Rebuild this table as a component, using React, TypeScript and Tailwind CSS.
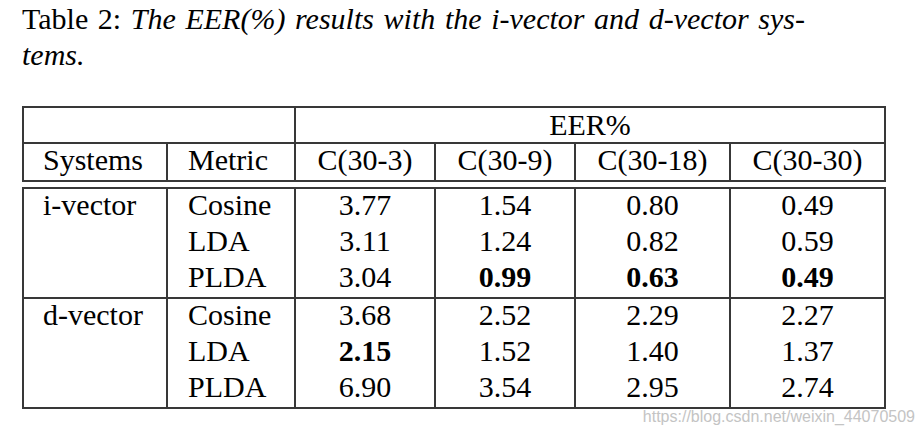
import React from 'react';

interface Row {
    metric: string;
    values: string[];
    bold: boolean[];
}

interface Group {
    system: string;
    rows: Row[];
}

const headers = ['C(30-3)', 'C(30-9)', 'C(30-18)', 'C(30-30)'];

const groups: Group[] = [
    {
        system: 'i-vector',
        rows: [
            { metric: 'Cosine', values: ['3.77', '1.54', '0.80', '0.49'], bold: [false, false, false, false] },
            { metric: 'LDA', values: ['3.11', '1.24', '0.82', '0.59'], bold: [false, false, false, false] },
            { metric: 'PLDA', values: ['3.04', '0.99', '0.63', '0.49'], bold: [false, true, true, true] },
        ],
    },
    {
        system: 'd-vector',
        rows: [
            { metric: 'Cosine', values: ['3.68', '2.52', '2.29', '2.27'], bold: [false, false, false, false] },
            { metric: 'LDA', values: ['2.15', '1.52', '1.40', '1.37'], bold: [true, false, false, false] },
            { metric: 'PLDA', values: ['6.90', '3.54', '2.95', '2.74'], bold: [false, false, false, false] },
        ],
    },
];

const gridCols = 'grid grid-cols-[142px_126px_138px_138px_153px_153px] gap-[2px] p-[2px] bg-[#383838] w-fit';

const App: React.FC = () => {
    return (
        <div className="w-[924px] h-[436px] bg-white text-black overflow-hidden [font-family:'Liberation_Serif','Times_New_Roman',serif] text-[30px]">
            {/* caption */}
            <div className="pl-[22px] pt-[1px] leading-[36px]">
                <div className="w-[783px] text-justify [text-align-last:justify]">
                    Table 2: <i>The EER(%) results with the i-vector and d-vector sys-</i>
                </div>
                <div>
                    <i>tems.</i>
                </div>
            </div>

            <div className="ml-[22px] mt-[33px] flex flex-col gap-[5px]">
                {/* header */}
                <div className={gridCols}>
                    <div className="col-span-2 bg-white h-[34px]"></div>
                    <div className="col-span-4 bg-white h-[34px] leading-[34px] text-center">EER%</div>
                    <div className="bg-white h-[36px] leading-[32px] pl-[19px]">Systems</div>
                    <div className="bg-white h-[36px] leading-[32px] pl-[20px]">Metric</div>
                    {headers.map((h) => (
                        <div key={h} className="bg-white h-[36px] leading-[32px] text-center">{h}</div>
                    ))}
                </div>

                {/* body */}
                <div className={gridCols}>
                    {groups.map((g) => (
                        <React.Fragment key={g.system}>
                            <div className="bg-white h-[108px] leading-[36px] pl-[19px]">
                                <div className="-mt-[2px]">{g.system}</div>
                            </div>
                            <div className="bg-white h-[108px] leading-[36px] pl-[20px]">
                                <div className="-mt-[2px] flex flex-col">
                                    {g.rows.map((r) => (
                                        <span key={r.metric}>{r.metric}</span>
                                    ))}
                                </div>
                            </div>
                            {[0, 1, 2, 3].map((c) => (
                                <div key={c} className="bg-white h-[108px] leading-[36px]">
                                    <div className="-mt-[2px] flex flex-col items-center">
                                        {g.rows.map((r) => (
                                            <span key={r.metric} className={r.bold[c] ? 'font-bold' : ''}>
                                                {r.values[c]}
                                            </span>
                                        ))}
                                    </div>
                                </div>
                            ))}
                        </React.Fragment>
                    ))}
                </div>
            </div>

            <div className="flex justify-end pr-[9px] -mt-[1px]">
                <span className="[font-family:'Liberation_Sans',Arial,sans-serif] text-[16px] leading-[18px] text-[#c4c4c4]">
                    https://blog.csdn.net/weixin_44070509
                </span>
            </div>
        </div>
    );
};

export default App;
